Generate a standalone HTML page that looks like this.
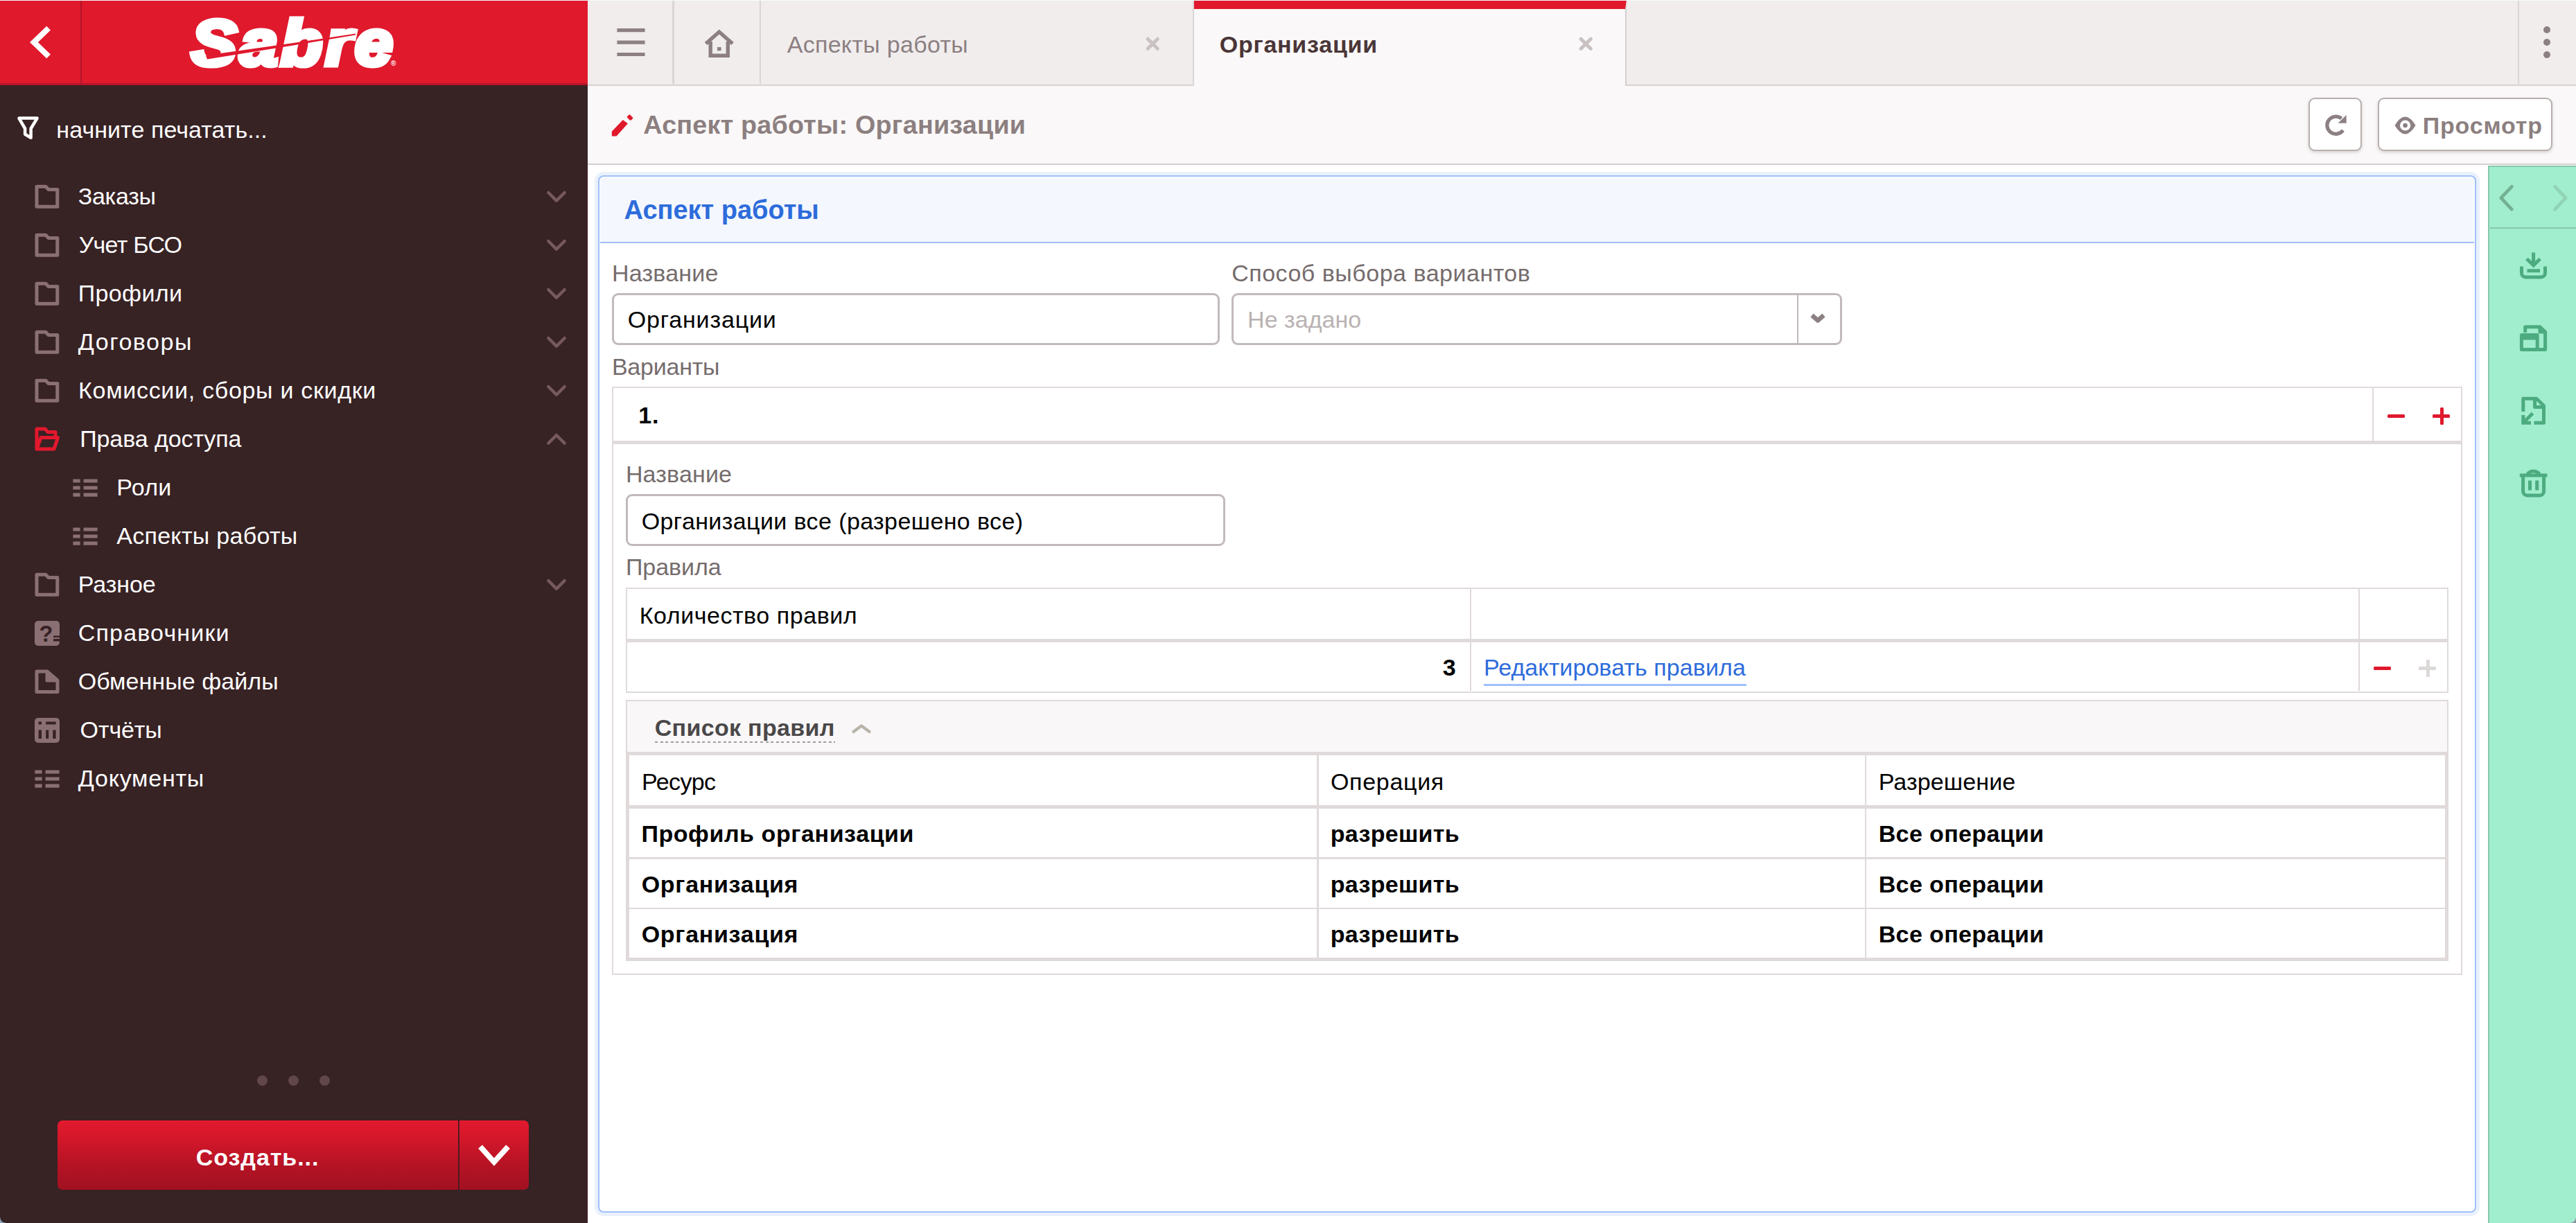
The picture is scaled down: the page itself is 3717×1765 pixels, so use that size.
<!DOCTYPE html>
<html lang="ru">
<head>
<meta charset="utf-8">
<title>Аспект работы: Организации</title>
<style>
*{box-sizing:border-box;margin:0;padding:0}
html,body{width:3717px;height:1765px;overflow:hidden;background:#fff}
body{font-family:"Liberation Sans",sans-serif;font-size:34px;color:#000;position:relative}
.abs{position:absolute}
.t{position:absolute;white-space:nowrap;line-height:40px;height:40px}
.b{font-weight:700}
svg{position:absolute;overflow:visible}

/* ---------- sidebar ---------- */
#side{left:0;top:0;width:848px;height:1765px;background:#372224}
#shead{left:0;top:0;width:848px;height:123px;background:#e0192d;border-bottom:3px solid #b5152a;border-top:1px solid #fdf4f5}
#ssep{left:116px;top:1px;width:2px;height:120px;background:#b31428}
.mi{color:#fff}
.ic{stroke:#8a7073;fill:none;stroke-width:5;stroke-linejoin:round;stroke-linecap:butt}
.chev{stroke:#76595d;fill:none;stroke-width:4.5}
.dot{width:15px;height:15px;border-radius:50%;background:#614749;top:1552px}
#create{left:82.8px;top:1616.7px;width:680.2px;height:100.3px;border-radius:7px;background:linear-gradient(#e2192e 0%,#d5172a 25%,#b51325 65%,#a11120 100%)}
#csep{left:660.6px;top:1616.7px;width:2.4px;height:100.3px;background:#4b1a21}

/* ---------- top tab bar ---------- */
#tabs{left:848px;top:0;width:2869px;height:123.5px;background:#f1eded;border-bottom:2.8px solid #d8d2d2}
.vsep{top:0;width:2.2px;height:121px;background:#dbd5d5}
#atab{left:1722.8px;top:0;width:624.5px;height:124px;background:#faf8f8;border-top:13px solid #e0192d;border-right:2px solid #d6d0d0}
#titlebar{left:848px;top:123.5px;width:2869px;height:114.8px;background:#faf8f8;border-bottom:2.4px solid #d6d0d0}
.btn{background:#fff;border:2px solid #b9afaf;border-radius:9px;box-shadow:0 2px 4px rgba(120,100,100,.25)}

/* ---------- panel ---------- */
#panel{left:863px;top:253px;width:2710px;height:1497px;border:2.7px solid #9fbffb;border-radius:8px;background:#fff;box-shadow:0 0 0 5px #eaf1fd}
#phead{left:866px;top:256px;width:2704px;height:95px;background:#f4f7fe;border-bottom:2.8px solid #9fbffb;border-radius:5px 5px 0 0}
.lbl{color:#756c6d}
.inp{background:#fff;border:3px solid #c2baba;border-radius:9px}
.bx{border:2.5px solid #e0dada;background:#fff}
.hl{background:#e0dada}

/* ---------- right bar ---------- */
#rbar{left:3590.4px;top:238.6px;width:127px;height:1527px;background:#a1eece;border-left:2.5px solid #88c8aa;border-top:2.2px solid #88c8aa}
#rsep{left:3593px;top:328px;width:124px;height:2.2px;background:#88c8aa}
.gi{stroke:#4dab80;fill:none;stroke-width:5;stroke-linejoin:round;stroke-linecap:butt}
</style>
</head>
<body>

<!-- ================= SIDEBAR ================= -->
<div id="side" class="abs"></div>
<div id="shead" class="abs"></div>
<div id="ssep" class="abs"></div>
<svg style="left:0;top:0" width="117" height="123"><polyline points="70.1,40.6 48.9,61 70.1,81.4" fill="none" stroke="#fff" stroke-width="8.2"/></svg>

<!-- logo -->
<div class="t b" id="logo" style="left:275.5px;top:6.5px;height:110px;line-height:110px;font-size:92.5px;font-style:italic;color:#fff;letter-spacing:4px;-webkit-text-stroke:7.2px #fff;transform:scaleX(1.065);transform-origin:0 0">Sabre</div>
<div class="t" style="left:564px;top:86px;height:12px;line-height:12px;font-size:10px;color:#fff;font-weight:700">®</div>
<svg style="left:0;top:0" width="848" height="123"><polygon points="297,80 420,62.5 513,48.5 513.5,50.3 420,66 299,85.5" fill="#e0192d"/></svg>

<!-- filter -->
<svg style="left:0;top:130px" width="80" height="90"><path d="M27.4,40.6 H53.6 L44.6,55.5 V68.8 L36.1,63.7 V55.5 Z" fill="none" stroke="#fff" stroke-width="4.5" stroke-linejoin="round"/></svg>
<div class="t mi" style="left:81.3px;top:166.5px;letter-spacing:0.08px">начните печатать...</div>

<!-- menu placeholder -->
<!--MENU-START-->
<svg style="left:50px;top:266.0px" width="36" height="36"><path class="ic" d="M3,3.2 H16 L20,7.6 H32.8 V32.2 H3 Z"/></svg>
<div class="t mi" style="left:112.7px;top:263.0px;letter-spacing:-0.257px">Заказы</div>
<svg style="left:788px;top:274.5px" width="30" height="18"><polyline class="chev" stroke-linecap="round" stroke-linejoin="round" points="3.3,3 14.9,14.6 26.6,3"/></svg>
<svg style="left:50px;top:336.0px" width="36" height="36"><path class="ic" d="M3,3.2 H16 L20,7.6 H32.8 V32.2 H3 Z"/></svg>
<div class="t mi" style="left:113.7px;top:333.0px;letter-spacing:-0.707px">Учет БСО</div>
<svg style="left:788px;top:344.5px" width="30" height="18"><polyline class="chev" stroke-linecap="round" stroke-linejoin="round" points="3.3,3 14.9,14.6 26.6,3"/></svg>
<svg style="left:50px;top:406.0px" width="36" height="36"><path class="ic" d="M3,3.2 H16 L20,7.6 H32.8 V32.2 H3 Z"/></svg>
<div class="t mi" style="left:112.7px;top:403.0px;letter-spacing:0.39px">Профили</div>
<svg style="left:788px;top:414.5px" width="30" height="18"><polyline class="chev" stroke-linecap="round" stroke-linejoin="round" points="3.3,3 14.9,14.6 26.6,3"/></svg>
<svg style="left:50px;top:476.0px" width="36" height="36"><path class="ic" d="M3,3.2 H16 L20,7.6 H32.8 V32.2 H3 Z"/></svg>
<div class="t mi" style="left:112.7px;top:473.0px;letter-spacing:1.574px">Договоры</div>
<svg style="left:788px;top:484.5px" width="30" height="18"><polyline class="chev" stroke-linecap="round" stroke-linejoin="round" points="3.3,3 14.9,14.6 26.6,3"/></svg>
<svg style="left:50px;top:546.0px" width="36" height="36"><path class="ic" d="M3,3.2 H16 L20,7.6 H32.8 V32.2 H3 Z"/></svg>
<div class="t mi" style="left:113.1px;top:543.0px;letter-spacing:0.698px">Комиссии, сборы и скидки</div>
<svg style="left:788px;top:554.5px" width="30" height="18"><polyline class="chev" stroke-linecap="round" stroke-linejoin="round" points="3.3,3 14.9,14.6 26.6,3"/></svg>
<svg style="left:50px;top:616.0px" width="36" height="36"><path d="M3,32 V3 H15 L19,7.5 H30 V13 M3,32 L9,15.5 H33.5 L28,32 Z" fill="none" stroke="#e3182d" stroke-width="5" stroke-linejoin="round"/></svg>
<div class="t mi" style="left:115.2px;top:613.0px;letter-spacing:-0.084px">Права доступа</div>
<svg style="left:788px;top:624.5px" width="30" height="18"><polyline class="chev" stroke-linecap="round" stroke-linejoin="round" points="3.3,14.6 14.9,3 26.6,14.6"/></svg>
<svg style="left:105px;top:686.0px" width="36" height="36"><path d="M0.4,8 h10.2 M15.6,8 h20 M0.4,18 h10.2 M15.6,18 h20 M0.4,28.2 h10.2 M15.6,28.2 h20" stroke="#8a7073" stroke-width="5.2" fill="none"/></svg>
<div class="t mi" style="left:168.3px;top:683.0px;letter-spacing:0.272px">Роли</div>
<svg style="left:105px;top:756.0px" width="36" height="36"><path d="M0.4,8 h10.2 M15.6,8 h20 M0.4,18 h10.2 M15.6,18 h20 M0.4,28.2 h10.2 M15.6,28.2 h20" stroke="#8a7073" stroke-width="5.2" fill="none"/></svg>
<div class="t mi" style="left:168.2px;top:753.0px;letter-spacing:0.297px">Аспекты работы</div>
<svg style="left:50px;top:826.0px" width="36" height="36"><path class="ic" d="M3,3.2 H16 L20,7.6 H32.8 V32.2 H3 Z"/></svg>
<div class="t mi" style="left:112.7px;top:823.0px;letter-spacing:-0.05px">Разное</div>
<svg style="left:788px;top:834.5px" width="30" height="18"><polyline class="chev" stroke-linecap="round" stroke-linejoin="round" points="3.3,3 14.9,14.6 26.6,3"/></svg>
<svg style="left:50px;top:896.0px" width="36" height="36"><path d="M5,0 H31 a5,5 0 0 1 5,5 V21.5 h-9 v2.6 h9 v2 h-9 v3.3 h9 V31 a5,5 0 0 1 -5,5 H5 a5,5 0 0 1 -5,-5 V5 a5,5 0 0 1 5,-5 Z" fill="#8a7073"/><text x="6.5" y="29.8" font-family="Liberation Sans,sans-serif" font-weight="700" font-size="32.5" fill="#372224">?</text></svg>
<div class="t mi" style="left:112.7px;top:893.0px;letter-spacing:1.192px">Справочники</div>
<svg style="left:50px;top:966.0px" width="36" height="36"><path class="ic" d="M3,3 H18 L33,16 V32.5 H3 Z M18,3 V16 H33"/><path d="M18,3 L33,16 H18 Z" fill="#8a7073"/></svg>
<div class="t mi" style="left:112.7px;top:963.0px;letter-spacing:0.083px">Обменные файлы</div>
<svg style="left:50px;top:1036.0px" width="36" height="36"><path fill-rule="evenodd" fill="#8a7073" d="M5,0 H31 a5,5 0 0 1 5,5 V31 a5,5 0 0 1 -5,5 H5 a5,5 0 0 1 -5,-5 V5 a5,5 0 0 1 5,-5 Z M5.6,5.5 v4 h4.4 v-4 Z M16.2,5.5 v4 h14.4 v-4 Z M5.6,17.5 v12.5 h4.4 v-12.5 Z M16.2,17.5 v12.5 h4 v-12.5 Z M26.2,17.5 v12.5 h4.4 v-12.5 Z"/></svg>
<div class="t mi" style="left:115.6px;top:1033.0px;letter-spacing:-0.103px">Отчёты</div>
<svg style="left:50px;top:1106.0px" width="36" height="36"><path d="M0.4,8 h10.2 M15.6,8 h20 M0.4,18 h10.2 M15.6,18 h20 M0.4,28.2 h10.2 M15.6,28.2 h20" stroke="#8a7073" stroke-width="5.2" fill="none"/></svg>
<div class="t mi" style="left:112.8px;top:1103.0px;letter-spacing:0.772px">Документы</div>
<!--MENU-END-->

<!-- dots -->
<div class="abs dot" style="left:370.6px"></div><div class="abs dot" style="left:415.6px"></div><div class="abs dot" style="left:460.7px"></div>

<!-- create button -->
<div id="create" class="abs"></div>
<div id="csep" class="abs"></div>
<div class="t b mi" style="left:282.8px;top:1649.7px;letter-spacing:0.932px">Создать...</div>
<svg style="left:690px;top:1648px" width="46" height="40"><polyline points="3,6.8 22.9,29 43,6.8" fill="none" stroke="#fff" stroke-width="7.8"/></svg>

<!-- ================= TAB BAR ================= -->
<div id="tabs" class="abs"></div>
<div class="abs vsep" style="left:970.4px"></div>
<div class="abs vsep" style="left:1095.6px"></div>
<div class="abs vsep" style="left:1720.6px"></div>
<div id="atab" class="abs"></div>
<div class="abs vsep" style="left:3632.6px"></div>
<div id="titlebar" class="abs"></div>

<!--TOP-START-->
<!-- tab bar icons -->
<svg style="left:890px;top:41px" width="41" height="41"><path d="M0.4,2.6 h40.2 M0.4,20.1 h40.2 M0.4,37.5 h40.2" stroke="#8c8082" stroke-width="5.2" fill="none"/></svg>
<svg style="left:1015px;top:40px" width="46" height="46"><path d="M3.5,23 L22.75,6 L42,23 M10.2,20 V40.2 H35.3 V20" fill="none" stroke="#8c8082" stroke-width="5.4" stroke-linejoin="miter"/><rect x="20" y="28" width="5.6" height="5.2" fill="#8c8082"/></svg>
<div class="t " style="left:1135.7px;top:43.7px;letter-spacing:0.297px;color:#8c8082">Аспекты работы</div>
<svg style="left:1652.5px;top:53px" width="22" height="22"><path d="M3.2,3.2 L17.3,17.3 M17.3,3.2 L3.2,17.3" stroke="#c9c1c2" stroke-width="5" stroke-linecap="round" fill="none"/></svg>
<div class="t b" style="left:1759.7px;top:43.8px;letter-spacing:0.771px;color:#4a3638">Организации</div>
<svg style="left:2277.8px;top:53.3px" width="22" height="22"><path d="M3.2,3.2 L17.3,17.3 M17.3,3.2 L3.2,17.3" stroke="#c9c1c2" stroke-width="5" stroke-linecap="round" fill="none"/></svg>
<div class="abs" style="left:3670px;top:38px;width:10px;height:10px;border-radius:50%;background:#8c8082"></div>
<div class="abs" style="left:3670px;top:56px;width:10px;height:10px;border-radius:50%;background:#8c8082"></div>
<div class="abs" style="left:3670px;top:74px;width:10px;height:10px;border-radius:50%;background:#8c8082"></div>
<!-- title bar -->
<svg style="left:870px;top:155px" width="60" height="50"><polygon points="12.8,41.5 12.8,34.7 28.8,18 35.9,23.3 19.6,41.5" fill="#e0192d"/><rect x="-3.9" y="-2.9" width="7.8" height="5.8" rx="1.6" transform="translate(39,14.6) rotate(45)" fill="#e0192d"/></svg>
<div class="t b" style="left:928.2px;top:160.4px;font-size:37.7px;letter-spacing:0.238px;color:#8c7f80">Аспект работы: Организации</div>
<div class="abs btn" style="left:3331px;top:141px;width:77px;height:77px;"></div>
<svg style="left:3350px;top:160px" width="42" height="42"><path d="M28.6,11.1 A12.6,12.6 0 1 0 30.8,28" fill="none" stroke="#8c8082" stroke-width="5.2"/><path d="M35.6,6 V17.7 H23.6 Z" fill="#8c8082"/></svg>
<div class="abs btn" style="left:3431px;top:141px;width:252px;height:77px;"></div>
<svg style="left:3450px;top:160px" width="42" height="42"><path d="M5.5,21 Q20.5,-4 35.5,21 Q20.5,46 5.5,21 Z" fill="#8c8082"/><circle cx="20.6" cy="21" r="7.6" fill="#fff"/><circle cx="20.6" cy="21" r="3.3" fill="#8c8082"/></svg>
<div class="t b" style="left:3495.7px;top:161.2px;letter-spacing:0.841px;color:#8c7f80">Просмотр</div>
<!--TOP-END-->

<!-- ================= PANEL ================= -->
<div id="panel" class="abs"></div>
<div id="phead" class="abs"></div>
<!--PANEL-START-->
<div class="t b" style="left:900.5px;top:282.8px;font-size:38px;letter-spacing:-0.02px;color:#2d6cdb">Аспект работы</div>
<div class="t lbl" style="left:882.9px;top:374.0px;letter-spacing:0.239px;">Название</div>
<div class="abs inp" style="left:883px;top:423px;width:877px;height:75px;"></div>
<div class="t " style="left:905.7px;top:441.2px;letter-spacing:0.845px;">Организации</div>
<div class="t lbl" style="left:1777.2px;top:374.0px;letter-spacing:0.504px;">Способ выбора вариантов</div>
<div class="abs inp" style="left:1777px;top:423px;width:881px;height:75px;"></div>
<div class="abs " style="left:2592.5px;top:426px;width:2.5px;height:69px;background:#c2baba"></div>
<div class="t " style="left:1800.1px;top:441.2px;letter-spacing:0.034px;color:#b9b2b2">Не задано</div>
<svg style="left:2610px;top:449px" width="26" height="20"><polyline points="4.5,6 13,13.5 21.5,6" fill="none" stroke="#8c8082" stroke-width="6.4" stroke-linecap="butt" stroke-linejoin="round"/></svg>
<div class="t lbl" style="left:882.9px;top:508.6px;letter-spacing:-0.221px;">Варианты</div>
<div class="abs bx" style="left:883px;top:558px;width:2670px;height:849px;"></div>
<div class="abs hl" style="left:885px;top:636px;width:2666px;height:5px;"></div>
<div class="abs hl" style="left:3423px;top:560px;width:2.199999999999818px;height:76px;"></div>
<div class="t b" style="left:921.3px;top:579.1px;letter-spacing:0.891px;">1.</div>
<div class="abs " style="left:3445.4px;top:598.3px;width:25.0px;height:5.0px;background:#e0192d;border-radius:1.5px"></div>
<div class="abs " style="left:3510.4px;top:598.3px;width:25.0px;height:5.0px;background:#e0192d;border-radius:1.5px"></div>
<div class="abs " style="left:3520.5px;top:588.3px;width:5.0px;height:25.100000000000023px;background:#e0192d;border-radius:1.5px"></div>
<div class="t lbl" style="left:902.9px;top:663.7px;letter-spacing:0.167px;">Название</div>
<div class="abs inp" style="left:903px;top:713px;width:865px;height:75px;"></div>
<div class="t " style="left:925.7px;top:732.0px;letter-spacing:0.397px;">Организации все (разрешено все)</div>
<div class="t lbl" style="left:902.9px;top:798.0px;letter-spacing:-0.042px;">Правила</div>
<div class="abs bx" style="left:903px;top:848px;width:2630px;height:151.60000000000002px;"></div>
<div class="abs hl" style="left:905px;top:922.2px;width:2626px;height:4.7999999999999545px;"></div>
<div class="abs hl" style="left:2120.5px;top:850px;width:2.5px;height:147px;"></div>
<div class="abs hl" style="left:3403px;top:850px;width:2.199999999999818px;height:147px;"></div>
<div class="t " style="left:922.7px;top:868.2px;letter-spacing:0.549px;">Количество правил</div>
<div class="t b" style="left:2081.7px;top:942.5px;letter-spacing:-1.4px;">3</div>
<div class="t " style="left:2140.9px;top:942.5px;letter-spacing:0.083px;color:#2d6cdb">Редактировать правила</div>
<div class="abs " style="left:2140.6px;top:986.8px;width:379.7000000000003px;height:2.800000000000068px;background:#9fc0fb"></div>
<div class="abs " style="left:3425.4px;top:962.3px;width:25.0px;height:5.0px;background:#e0192d;border-radius:1.5px"></div>
<div class="abs " style="left:3490.4px;top:962.3px;width:25.0px;height:5.0px;background:#ddd8d8;border-radius:1.5px"></div>
<div class="abs " style="left:3500.5px;top:952.3px;width:5.0px;height:25.0px;background:#ddd8d8;border-radius:1.5px"></div>
<div class="abs bx" style="left:903px;top:1009.5px;width:2630px;height:377.5px;background:#f9f7f7"></div>
<div class="t b" style="left:944.7px;top:1029.8px;letter-spacing:0.329px;color:#4a4849">Список правил</div>
<div class="abs" style="left:945.3px;top:1069.5px;width:259.6px;height:2.6px;background:repeating-linear-gradient(90deg,#a39d9d 0,#a39d9d 4px,transparent 4px,transparent 7.6px)"></div>
<svg style="left:1228px;top:1042px" width="30" height="18"><polyline points="3.5,14 15,5.5 26.5,14" fill="none" stroke="#b8b4aa" stroke-width="4.2" stroke-linecap="round" stroke-linejoin="round"/></svg>
<div class="abs " style="left:903px;top:1085px;width:2630px;height:302px;background:#fff;border:5px solid #e0dada"></div>
<div class="abs hl" style="left:908px;top:1162px;width:2620px;height:5px;"></div>
<div class="abs hl" style="left:908px;top:1237px;width:2620px;height:2.7000000000000455px;"></div>
<div class="abs hl" style="left:908px;top:1309.5px;width:2620px;height:2.7000000000000455px;"></div>
<div class="abs hl" style="left:1900px;top:1090px;width:2.5px;height:292px;"></div>
<div class="abs hl" style="left:2690.5px;top:1090px;width:2.5px;height:292px;"></div>
<div class="t " style="left:926.0px;top:1108.2px;letter-spacing:-0.504px;">Ресурс</div>
<div class="t " style="left:1920.0px;top:1108.2px;letter-spacing:0.678px;">Операция</div>
<div class="t " style="left:2710.7px;top:1108.2px;letter-spacing:0.129px;">Разрешение</div>
<div class="t b" style="left:925.4px;top:1183.0px;letter-spacing:0.579px;">Профиль организации</div>
<div class="t b" style="left:925.7px;top:1255.5px;letter-spacing:0.701px;">Организация</div>
<div class="t b" style="left:925.7px;top:1328.0px;letter-spacing:0.701px;">Организация</div>
<div class="t b" style="left:1919.7px;top:1183.0px;letter-spacing:0.317px;">разрешить</div>
<div class="t b" style="left:2710.7px;top:1183.0px;letter-spacing:0.372px;">Все операции</div>
<div class="t b" style="left:1919.7px;top:1255.5px;letter-spacing:0.317px;">разрешить</div>
<div class="t b" style="left:2710.7px;top:1255.5px;letter-spacing:0.372px;">Все операции</div>
<div class="t b" style="left:1919.7px;top:1328.0px;letter-spacing:0.317px;">разрешить</div>
<div class="t b" style="left:2710.7px;top:1328.0px;letter-spacing:0.372px;">Все операции</div>
<!--PANEL-END-->

<!-- ================= RIGHT BAR ================= -->
<div id="rbar" class="abs"></div>
<div id="rsep" class="abs"></div>
<!--RBAR-START-->
<svg style="left:3600px;top:258px" width="32" height="56"><polyline points="24.3,11.3 8.8,27.7 24.3,44.1" fill="none" stroke="#74b092" stroke-width="4.8" stroke-linecap="round" stroke-linejoin="round"/></svg>
<svg style="left:3678px;top:258px" width="32" height="56"><polyline points="8.6,11.3 24.1,27.7 8.6,44.1" fill="none" stroke="#90d4b5" stroke-width="4.8" stroke-linecap="round" stroke-linejoin="round"/></svg>
<svg style="left:3635px;top:362px" width="42" height="42"><g class="gi"><path d="M20.6,2.5 V20 M11,11.5 L20.6,21 L30.2,11.5" stroke-linecap="butt" stroke-linejoin="miter"/><path d="M3.5,22.5 V32 a6,6 0 0 0 6,6 H31.5 a6,6 0 0 0 6,-6 V22.5" stroke-linecap="butt"/><path d="M11.5,28.7 H30" stroke-linecap="butt"/></g></svg>
<svg style="left:3635px;top:467px" width="42" height="42"><g class="gi" stroke-linecap="butt"><path d="M8.7,13 V4.7 H30 L37.6,12 V37.5 H27"/><path d="M30,4.7 V12 H37.6" /><path d="M3.4,16.5 H26.2 V37.6 H3.4 Z"/><path d="M3.4,20.5 H26.2" stroke-width="6"/></g></svg>
<svg style="left:3635px;top:570px" width="42" height="44"><g class="gi" stroke-linecap="butt"><path d="M5.8,24 V5.2 H25 L35.5,15.5 V40.2 H21.5"/><path d="M22.5,5.2 V17.5 H35.5"/><path d="M19.5,26.5 L6,40 M5.8,29 V40.2 H17" stroke-linejoin="miter"/></g></svg>
<svg style="left:3635px;top:676px" width="42" height="44"><g class="gi" stroke-linecap="butt"><path d="M0.8,10 H40.4"/><path d="M12,10 a8.6,6 0 0 1 17.2,0"/><path d="M5.6,10.5 V33 a6,6 0 0 0 6,6 H29.6 a6,6 0 0 0 6,-6 V10.5"/><path d="M15.5,17.5 V31.5 M25.7,17.5 V31.5"/></g></svg>
<!--RBAR-END-->

<!-- window chrome details -->
<div class="abs" style="left:0;top:0;width:3717px;height:1px;background:#f4fbfa"></div>
<div class="abs" style="left:0;top:1757px;width:8px;height:8px;background:radial-gradient(circle at 100% 0,rgba(138,160,181,0) 7.2px,#8aa0b5 8px)"></div>
<div class="abs" style="left:3709px;top:1757px;width:8px;height:8px;background:radial-gradient(circle at 0 0,rgba(138,150,160,0) 7.2px,#8a96a0 8px)"></div>

</body>
</html>
